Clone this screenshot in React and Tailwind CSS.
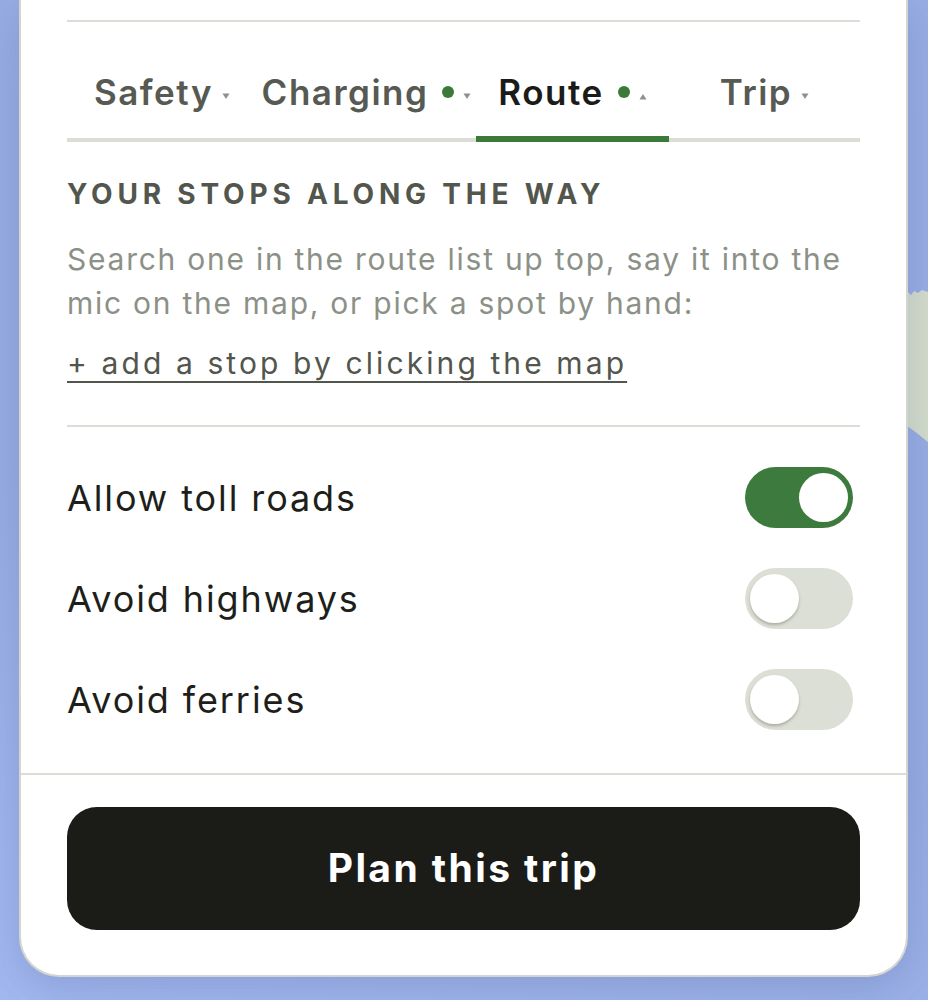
import React from "react";

const FONT = { fontFamily: "Inter, 'Open Sans', sans-serif" };

function Caret({ up = false }) {
  return (
    <svg width="8" height="7" viewBox="0 0 8 7" className="ml-[9px] mt-[8px] shrink-0">
      {up ? (
        <path d="M4 1 L7.5 6.5 L0.5 6.5 Z" fill="#8e918a" />
      ) : (
        <path d="M0.5 0.5 L7.5 0.5 L4 6 Z" fill="#8e918a" />
      )}
    </svg>
  );
}

function Dot() {
  return <span className="ml-[14px] inline-block h-[12px] w-[12px] shrink-0 rounded-full bg-[#3c7a3c]" />;
}

function Tab({ label, width, dot, active, up }) {
  return (
    <div className={`relative flex h-full items-center justify-center ${width}`}>
      <span
        className={`whitespace-nowrap text-[35px] font-semibold tracking-[1.5px] ${
          active ? "text-[#1b1c19]" : "text-[#575a52]"
        }`}
      >
        {label}
      </span>
      {dot && <Dot />}
      <Caret up={up} />
      {active && <div className="absolute bottom-[-4px] left-0 right-0 h-[6px] bg-[#3c7a3c]" />}
    </div>
  );
}

function Toggle({ on }) {
  return (
    <div
      className={`flex h-[61px] w-[108px] items-center rounded-full px-[5px] ${
        on ? "justify-end bg-[#3d7a3d]" : "justify-start bg-[#dcdfd5]"
      }`}
    >
      <div
        className={`h-[49px] w-[49px] rounded-full bg-white ${
          on ? "" : "shadow-[0_2px_3px_rgba(80,85,70,0.35)]"
        }`}
      />
    </div>
  );
}

function Row({ label, on }) {
  return (
    <div className="flex h-[101px] items-center justify-between">
      <span className="text-[36px] tracking-[1.9px] text-[#1e1f1b]">{label}</span>
      <div className="mr-[7px]">
        <Toggle on={on} />
      </div>
    </div>
  );
}

export default function App() {
  return (
    <div
      className="relative h-[1000px] w-[928px] overflow-hidden bg-[linear-gradient(200deg,#98ade3_0%,#97ace2_60%,#a3b8ef_100%)]"
      style={FONT}
    >
      <svg className="absolute right-0 top-[286px]" width="24" height="160" viewBox="0 0 24 160">
        <path
          d="M0 8 L4 6 L7 9 L10 5 L14 7 L18 4 L24 6 L24 156 L14 148 L6 142 L0 138 Z"
          fill="#d3dccb"
        />
      </svg>
      <div className="relative ml-[19px] w-[889px] rounded-b-[40px] border-x-2 border-b-2 border-[#d3d6cf] bg-white shadow-[0_12px_40px_rgba(40,60,120,0.18)]">
        <div className="px-[46px] pb-[23px] pt-[20px]">
          <div className="h-[2px] bg-[#dcddd5]" />
          <div className="mt-[24px] flex h-[96px] border-b-4 border-[#dcddd5]">
            <Tab label="Safety" width="w-[190px]" />
            <Tab label="Charging" width="w-[219px]" dot />
            <Tab label="Route" width="w-[193px]" dot active up />
            <Tab label="Trip" width="flex-1" />
          </div>
          <div className="mt-[36px] h-[32px] whitespace-nowrap text-[28px] font-bold uppercase leading-[32px] tracking-[4.8px] text-[#52564c]">
            Your stops along the way
          </div>
          <p className="mt-[27px] whitespace-nowrap text-[30px] leading-[44px] tracking-[1.75px] text-[#8c9187]">
            Search one in the route list up top, say it into the
            <br />
            mic on the map, or pick a spot by hand:
          </p>
          <div className="mt-[16px] h-[44px] whitespace-nowrap text-[30px] leading-[44px] tracking-[3.1px]">
            <span className="text-[#52564c] underline decoration-[2px] underline-offset-[7px]">
              + add a stop by clicking the map
            </span>
          </div>
          <div className="mt-[40px] h-[2px] bg-[#dcddd5]" />
          <div className="mt-[20px]">
            <Row label="Allow toll roads" on />
            <Row label="Avoid highways" />
            <Row label="Avoid ferries" />
          </div>
        </div>
        <div className="border-t-2 border-[#dcddd5] px-[46px] pb-[45px] pt-[32px]">
          <button className="flex h-[123px] w-full items-center justify-center rounded-[30px] bg-[#1b1c18] text-[39px] font-bold tracking-[2.4px] text-white">
            Plan this trip
          </button>
        </div>
      </div>
    </div>
  );
}
